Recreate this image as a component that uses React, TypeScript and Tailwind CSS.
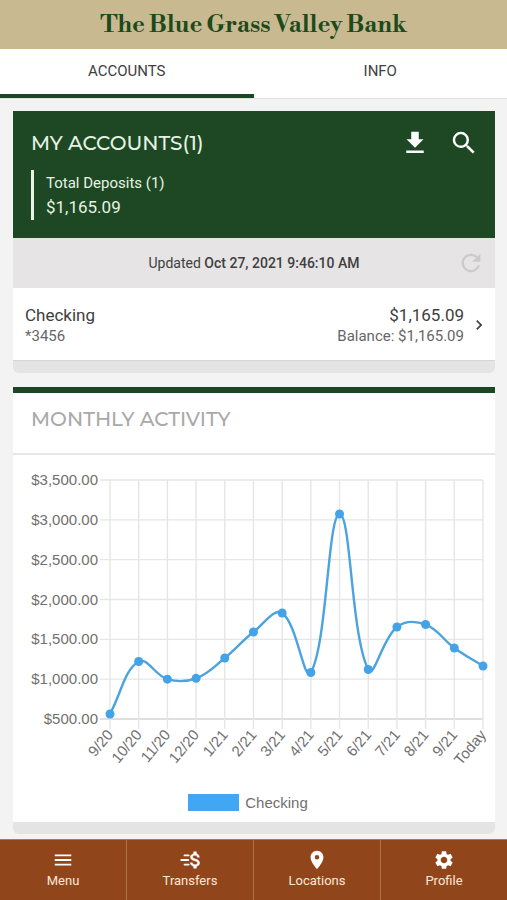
import React, { useState } from 'react';
import { MdChevronRight, MdLocationOn, MdMenu, MdRefresh, MdSearch, MdSettings } from 'react-icons/md';
import clsx from 'clsx';

type Point = { x: number; y: number };

const activity = [
  { label: '9/20', value: 563 },
  { label: '10/20', value: 1222 },
  { label: '11/20', value: 1000 },
  { label: '12/20', value: 1010 },
  { label: '1/21', value: 1266 },
  { label: '2/21', value: 1592 },
  { label: '3/21', value: 1830 },
  { label: '4/21', value: 1084 },
  { label: '5/21', value: 3073 },
  { label: '6/21', value: 1121 },
  { label: '7/21', value: 1655 },
  { label: '8/21', value: 1686 },
  { label: '9/21', value: 1391 },
  { label: 'Today', value: 1165 },
];

const ticks = [3500, 3000, 2500, 2000, 1500, 1000, 500];

const plot = { left: 97, right: 470, top: 25, bottom: 264 };

const toX = (i: number) => plot.left + (i * (plot.right - plot.left)) / (activity.length - 1);
const toY = (v: number) => plot.bottom - ((v - 500) / 3000) * (plot.bottom - plot.top);

const formatMoney = (v: number) => `$${v.toLocaleString('en-US', { minimumFractionDigits: 2 })}`;

// Smooth curve through all points, tangents weighted by neighbour distance
function curve(points: Point[], tension = 0.4) {
  const controls = points.map((p, i) => {
    const prev = points[i - 1] ?? p;
    const next = points[i + 1] ?? p;
    const d1 = Math.hypot(p.x - prev.x, p.y - prev.y);
    const d2 = Math.hypot(next.x - p.x, next.y - p.y);
    const a = (tension * d1) / (d1 + d2);
    const b = (tension * d2) / (d1 + d2);
    const dx = next.x - prev.x;
    const dy = next.y - prev.y;
    return {
      before: { x: p.x - a * dx, y: p.y - a * dy },
      after: { x: p.x + b * dx, y: p.y + b * dy },
    };
  });

  return points
    .map((p, i) => {
      if (i === 0) return `M${p.x} ${p.y}`;
      const c1 = controls[i - 1].after;
      const c2 = controls[i].before;
      return `C${c1.x} ${c1.y} ${c2.x} ${c2.y} ${p.x} ${p.y}`;
    })
    .join(' ');
}

function DownloadIcon() {
  return (
    <svg className="w-[30px] h-[30px]" viewBox="0 0 24 24" fill="currentColor" aria-hidden="true">
      <path d="M18.8 9H15V3H9v6H5.2l6.8 6.8zM5 18v2h14v-2z" />
    </svg>
  );
}

function TransferIcon() {
  return (
    <svg className="w-[22px] h-[22px]" viewBox="0 0 24 24" fill="currentColor" aria-hidden="true">
      <path
        d="M17.8 10.9c-2.27-.59-3-1.2-3-2.15 0-1.09 1.01-1.85 2.7-1.85 1.78 0 2.44.85 2.5 2.1h2.21c-.07-1.72-1.12-3.3-3.21-3.81V3h-3v2.16c-1.94.42-3.5 1.68-3.5 3.61 0 2.31 1.91 3.46 4.7 4.13 2.5.6 3 1.48 3 2.41 0 .69-.49 1.79-2.7 1.79-2.06 0-2.87-.92-2.98-2.1h-2.2c.12 2.19 1.76 3.42 3.68 3.83V21h3v-2.15c1.95-.37 3.5-1.5 3.5-3.55 0-2.84-2.43-3.81-4.7-4.4z"
        stroke="currentColor"
        strokeWidth="0.5"
      />
      <path d="M6 7h4.5M2.500 12h7.500M6 17h4.500" stroke="currentColor" strokeWidth="2" strokeLinecap="round" />
    </svg>
  );
}

function ActivityChart() {
  const points = activity.map((item, i) => ({ x: toX(i), y: toY(item.value) }));

  return (
    <svg
      className="block w-full h-auto font-['Liberation_Sans',sans-serif] text-[15px]"
      viewBox="0 0 482 320"
      role="img"
      aria-label="Monthly activity"
    >
      {ticks.map((tick) => (
        <g key={tick}>
          <line
            x1={plot.left - 10}
            x2={plot.right}
            y1={toY(tick)}
            y2={toY(tick)}
            stroke={tick === 500 ? '#d4d4d4' : '#e6e6e6'}
            strokeWidth={1.4}
          />
          <text x={85} y={toY(tick) + 5} textAnchor="end" fill="#707070">
            {formatMoney(tick)}
          </text>
        </g>
      ))}
      {activity.map((item, i) => (
        <g key={item.label}>
          <line x1={toX(i)} x2={toX(i)} y1={plot.top} y2={plot.bottom + 10} stroke="#e6e6e6" strokeWidth={1.4} />
          <text
            transform={`translate(${toX(i)} ${plot.bottom + 13}) rotate(-50)`}
            y={5}
            textAnchor="end"
            fill="#707070"
          >
            {item.label}
          </text>
        </g>
      ))}
      <path d={curve(points)} fill="none" stroke="#4ba3df" strokeWidth={2.4} />
      {points.map((p) => (
        <circle key={p.x} cx={p.x} cy={p.y} r={4.5} fill="#44a2e6" />
      ))}
    </svg>
  );
}

const tabs = ['ACCOUNTS', 'INFO'];

const navItems = [
  { label: 'Menu', icon: <MdMenu className="w-[22px] h-6" /> },
  { label: 'Transfers', icon: <TransferIcon /> },
  { label: 'Locations', icon: <MdLocationOn className="w-[22px] h-[22px]" /> },
  { label: 'Profile', icon: <MdSettings className="w-[22px] h-[22px]" /> },
];

export default function App() {
  const [activeTab, setActiveTab] = useState('ACCOUNTS');

  return (
    <div className="min-h-screen flex flex-col bg-[#f3f3f3] font-[Roboto,sans-serif] text-[#404040]">
      <header className="bg-[#c9b991] pt-[9px] pb-2 text-center">
        <h1 className="font-['Libre_Bodoni','Bodoni_Moda','Playfair_Display','Liberation_Serif',serif] font-bold text-2xl leading-8 text-[#1d4a1c]">
          The Blue Grass Valley Bank
        </h1>
      </header>

      <div role="tablist" className="flex bg-white border-b border-[#e2e2e2]">
        {tabs.map((tab) => (
          <button
            key={tab}
            role="tab"
            aria-selected={activeTab === tab}
            onClick={() => setActiveTab(tab)}
            className={clsx(
              'flex-1 h-[49px] border-b-4 text-[15px]',
              activeTab === tab ? 'border-[#1c4624]' : 'border-transparent'
            )}
          >
            {tab}
          </button>
        ))}
      </div>

      <main className="flex-1 pl-[13px] pr-3 pt-3 pb-[5px] flex flex-col gap-[14px]">
        <section className="rounded-b-md overflow-hidden bg-[#e4e4e4] pb-3">
          <div className="bg-[#1d4823] text-[#e6f3e4] pl-[18px] pr-4 pt-[17px] pb-[18px]">
            <div className="flex items-center justify-between h-[30px]">
              <h2 className="font-[Montserrat,Inter,sans-serif] font-medium text-xl">MY ACCOUNTS(1)</h2>
              <div className="flex gap-[19px] text-white">
                <button aria-label="Download">
                  <DownloadIcon />
                </button>
                <button aria-label="Search">
                  <MdSearch className="w-[30px] h-[30px]" />
                </button>
              </div>
            </div>
            <div className="mt-3 border-l-[3px] border-[#e6f3e4] pl-3 py-px">
              <p className="text-[15px] leading-6">Total Deposits (1)</p>
              <p className="text-[17px] leading-6">$1,165.09</p>
            </div>
          </div>

          <div className="flex items-center bg-[#e6e4e5] h-[50px] px-[10px]">
            <p className="flex-1 pl-7 text-center text-sm">
              Updated <span className="font-medium">Oct 27, 2021 9:46:10 AM</span>
            </p>
            <button aria-label="Refresh" className="text-[#cccaca]">
              <MdRefresh className="w-7 h-7" />
            </button>
          </div>

          <button className="w-full flex items-center bg-white border-b border-[#d6d6d6] pl-3 pr-[6px] pt-4 pb-[14px] text-left">
            <span className="flex-1">
              <span className="block text-[17px] leading-[22px]">Checking</span>
              <span className="block text-[15px] leading-5 text-[#666]">*3456</span>
            </span>
            <span className="text-right">
              <span className="block text-[17px] leading-[22px]">$1,165.09</span>
              <span className="block text-[15px] leading-5 text-[#666]">Balance: $1,165.09</span>
            </span>
            <MdChevronRight className="w-5 h-5 ml-[5px]" />
          </button>
        </section>

        <section className="rounded-b-md overflow-hidden bg-[#e4e4e4] pb-3">
          <div className="bg-white border-t-[6px] border-[#1c4624]">
            <h2 className="px-[18px] pt-3 pb-[20px] border-b-2 border-[#e6e6e6] font-[Montserrat,Inter,sans-serif] font-medium text-xl text-[#a9a9a9]">
              MONTHLY ACTIVITY
            </h2>
            <ActivityChart />
            <div className="flex items-center justify-center gap-[6px] pt-[18px] pb-[10px] pr-3">
              <span className="w-[51px] h-[17px] bg-[#41a6f3]" />
              <span className="font-['Liberation_Sans',sans-serif] text-[15px] leading-[19px] text-[#707070]">
                Checking
              </span>
            </div>
          </div>
        </section>
      </main>

      <nav className="sticky bottom-0 flex bg-[#91451b] border-t border-[#bb7650] text-[#fbe9d8]">
        {navItems.map((item) => (
          <a
            key={item.label}
            href="#"
            className="flex-1 h-[60px] pt-2 flex flex-col items-center border-r border-[#b0714b] last:border-r-0"
          >
            <span className="h-6 flex items-center text-white">{item.icon}</span>
            <span className="text-[13px] leading-[18px]">{item.label}</span>
          </a>
        ))}
      </nav>
    </div>
  );
}
